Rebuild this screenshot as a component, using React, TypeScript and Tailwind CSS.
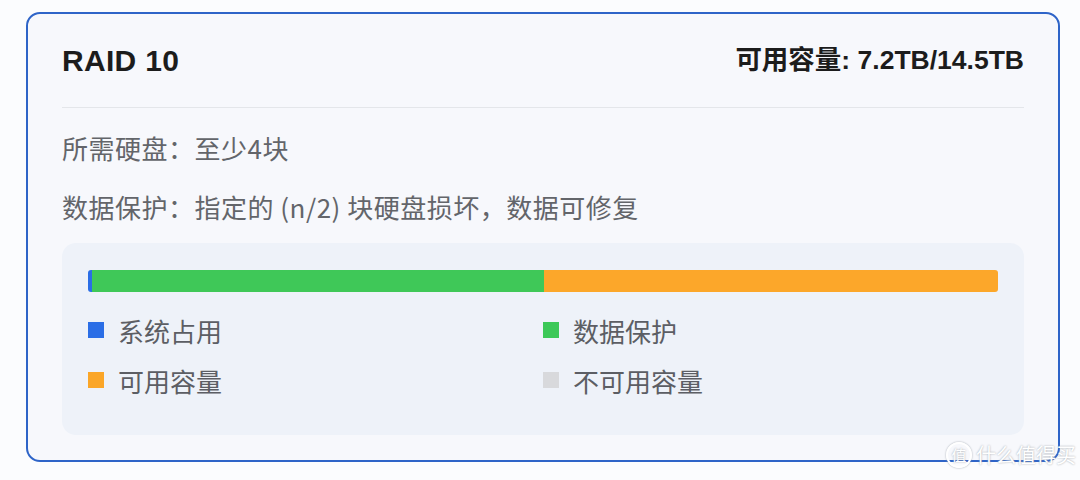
const cjk = "font-['Noto_Sans_CJK_SC',sans-serif]";
const latin = "font-['Liberation_Sans','Noto_Sans_CJK_SC',sans-serif]";

const legend = [
  { label: "系统占用", color: "bg-[#2b6ee6]" },
  { label: "数据保护", color: "bg-[#3cc858]" },
  { label: "可用容量", color: "bg-[#fba628]" },
  { label: "不可用容量", color: "bg-[#d8d9dc]" },
];

export default function App() {
  return (
    <div className="relative min-h-screen bg-[#fbfcfe] pt-3 pl-[26px]">
      <div className="w-[1034px] h-[450px] rounded-[14px] border-2 border-[#2e64c8] bg-[#f7f8fc] px-[34px]">
        {/* header */}
        <div className="flex h-[94px] items-center justify-between border-b border-[#e4e6ea]">
          <span className={`${latin} text-[30px] font-bold tracking-[0.3px] text-[#1c1c1c]`}>RAID 10</span>
          <span className={`${latin} text-[26.5px] font-bold text-[#1c1c1c]`}>
            可用容量: 7.2TB/14.5TB
          </span>
        </div>

        <div className={`${cjk} mt-[21px] flex h-[36px] items-center text-[26px] tracking-[0.5px] text-[#63656a]`}>
          所需硬盘：至少4块
        </div>
        <div className={`${cjk} mt-[23px] flex h-[36px] items-center text-[26px] tracking-[0.5px] text-[#63656a]`}>
          数据保护：指定的 (n/2) 块硬盘损坏，数据可修复
        </div>

        {/* usage box */}
        <div className="mt-[19px] h-[192px] rounded-[14px] bg-[#eef2f9] px-[26px] pt-[27px]">
          <div className="flex h-[22px] overflow-hidden rounded-[3px]">
            <div className="w-[4px] bg-[#2b6ee6]" />
            <div className="w-[452px] bg-[#3fc858]" />
            <div className="flex-1 bg-[#fca72a]" />
          </div>
          <div className="mt-[20px] grid grid-cols-2 gap-y-[14px]">
            {legend.map((item) => (
              <div key={item.label} className="flex h-[36px] items-center">
                <span className={`h-[16px] w-[16px] ${item.color}`} />
                <span className={`${cjk} ml-[14px] text-[26px] text-[#5c5e64]`}>{item.label}</span>
              </div>
            ))}
          </div>
        </div>
      </div>

      {/* watermark */}
      <div className={`${cjk} absolute left-[946px] top-[440px] flex items-center gap-[4px] text-[20px] text-white [text-shadow:0_0_2px_#9aa0a8]`}>
        <span className="flex h-[26px] w-[26px] items-center justify-center rounded-full border-2 border-white text-[15px] shadow-[0_0_2px_#9aa0a8]">
          值
        </span>
        <span>什么值得买</span>
      </div>
    </div>
  );
}
